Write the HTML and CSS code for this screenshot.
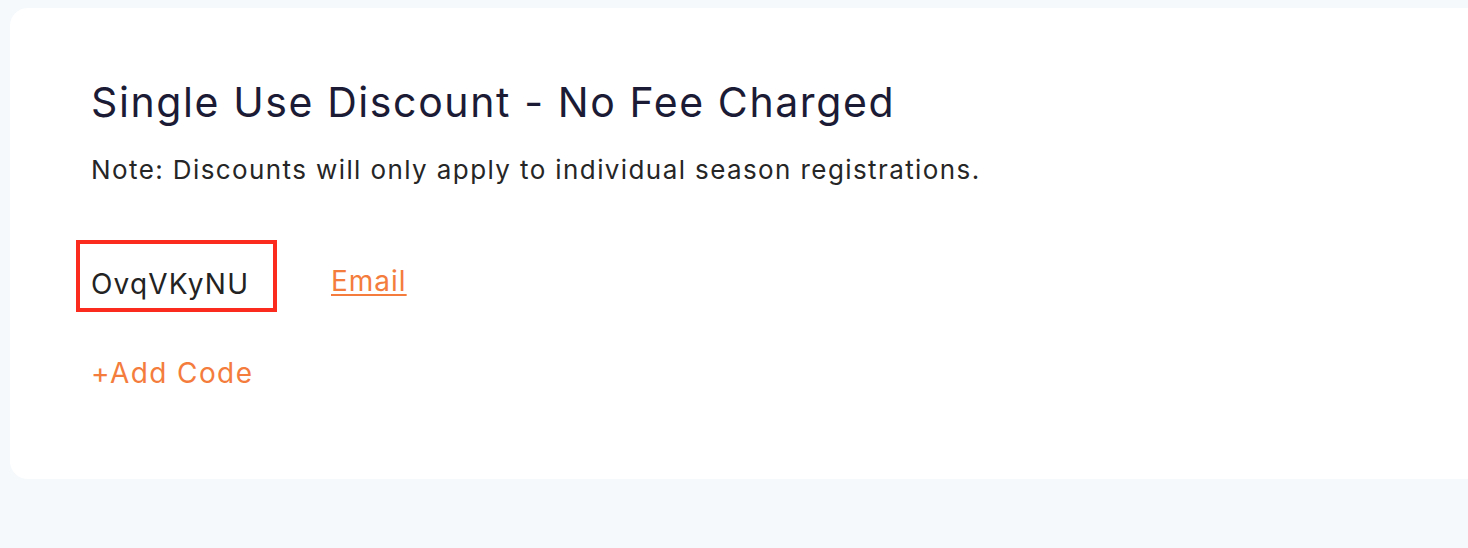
FILE: index.html
```html
<!DOCTYPE html>
<html>
<head>
<meta charset="utf-8">
<link rel="stylesheet" href="styles.css">
</head>
<body>
<div class="page">
  <section class="card">
    <h1 class="title">Single Use Discount - No Fee Charged</h1>
    <p class="note">Note: Discounts will only apply to individual season registrations.</p>
    <div class="code-row">
      <div class="code-box">OvqVKyNU</div>
      <a class="email" href="#">Email</a>
    </div>
    <a class="add" href="#">+Add Code</a>
  </section>
</div>
</body>
</html>
```

FILE: styles.css
```css
* { box-sizing: border-box; }
html, body { margin: 0; padding: 0; }
body {
  background: #f5f9fc;
  font-family: Inter, "Noto Sans", sans-serif;
  width: 1468px;
  height: 548px;
  overflow: hidden;
}
.page {
  padding: 8px 0 0 10px;
}
.card {
  background: #ffffff;
  border-radius: 18px 0 0 18px;
  height: 471px;
  width: 1480px;
  padding: 70px 0 0 81px;
}
.title {
  margin: 0;
  font-size: 41px;
  font-weight: 400;
  letter-spacing: 1.6px;
  color: #1c1b36;
  line-height: 48px;
}
.note {
  margin: 28px 0 0;
  font-size: 26px;
  letter-spacing: 1.4px;
  color: #262626;
  line-height: 32px;
}
.code-row {
  display: flex;
  align-items: flex-start;
  margin: 54px 0 0 -15px;
}
.code-box {
  width: 201px;
  height: 72px;
  border: 4px solid #fb2b1e;
  padding: 23px 0 0 11px;
  font-size: 28px;
  letter-spacing: 1.2px;
  line-height: 34px;
  color: #232323;
}
.email {
  margin: 24px 0 0 54px;
  font-size: 28px;
  letter-spacing: 1px;
  line-height: 34px;
  color: #f47d3d;
  text-decoration: underline;
  text-decoration-thickness: 2px;
  text-underline-offset: 3px;
}
.add {
  display: inline-block;
  margin-top: 44px;
  font-size: 28px;
  letter-spacing: 1.4px;
  line-height: 34px;
  color: #f47d3d;
  text-decoration: none;
}
```
